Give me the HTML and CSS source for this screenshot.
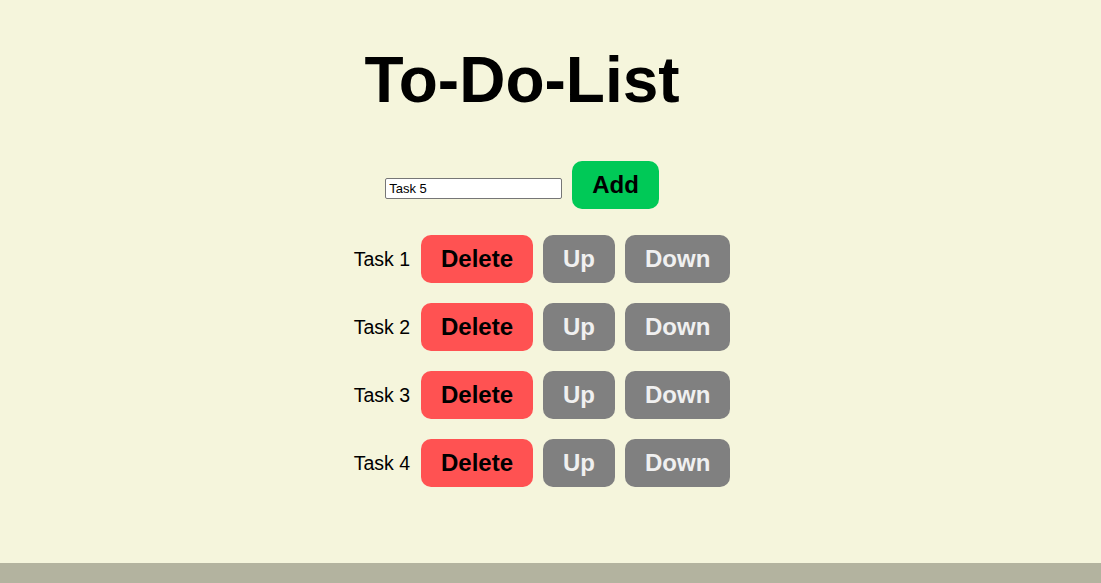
FILE: index.html
```html
<!DOCTYPE html>
<html>
<head>
<meta charset="utf-8">
<link rel="stylesheet" href="styles.css">
</head>
<body>
<div class="app">
  <h1 class="title">To-Do-List</h1>
  <div class="add-row">
    <input class="task-input" type="text" value="Task 5">
    <button class="btn btn-add">Add</button>
  </div>
  <ol class="list">
    <li class="item"><span class="label">Task 1</span><button class="btn btn-delete">Delete</button><button class="btn btn-move">Up</button><button class="btn btn-move">Down</button></li>
    <li class="item"><span class="label">Task 2</span><button class="btn btn-delete">Delete</button><button class="btn btn-move">Up</button><button class="btn btn-move">Down</button></li>
    <li class="item"><span class="label">Task 3</span><button class="btn btn-delete">Delete</button><button class="btn btn-move">Up</button><button class="btn btn-move">Down</button></li>
    <li class="item"><span class="label">Task 4</span><button class="btn btn-delete">Delete</button><button class="btn btn-move">Up</button><button class="btn btn-move">Down</button></li>
  </ol>
</div>
<div class="footer"></div>
</body>
</html>
```

FILE: styles.css
```css
html, body {
  margin: 0;
  padding: 0;
}
body {
  background: #f5f5dc;
  font-family: "Liberation Sans", Arial, sans-serif;
  height: 583px;
  display: flex;
  flex-direction: column;
  overflow: hidden;
}
.app {
  flex: 1;
  display: flex;
  flex-direction: column;
  align-items: center;
  padding-right: 57px;
}
.title {
  font-size: 64px;
  font-weight: bold;
  margin: 40px 0 0 0;
  line-height: 80px;
  color: #000;
}
.add-row {
  display: flex;
  align-items: center;
  gap: 10px;
  margin-top: 41px;
}
.task-input {
  box-sizing: border-box;
  width: 177px;
  height: 21px;
  margin-top: 6px;
  border: 1px solid #767676;
  border-radius: 2px;
  padding: 1px 3px;
  font-family: "Liberation Sans", Arial, sans-serif;
  font-size: 13px;
  background: #fff;
  color: #000;
}
.btn {
  border: none;
  border-radius: 10px;
  padding: 10px 20px;
  font-family: "Liberation Sans", Arial, sans-serif;
  font-size: 24px;
  font-weight: bold;
  line-height: 28px;
  cursor: pointer;
}
.btn-add {
  background: #00c957;
  color: #000;
}
.btn-delete {
  background: #ff5252;
  color: #000;
}
.btn-move {
  background: #808080;
  color: #f0f0f0;
}
.list {
  list-style: none;
  margin: 26px 0 0 0;
  padding: 0 0 0 40px;
  display: flex;
  flex-direction: column;
  gap: 20px;
}
.item {
  display: flex;
  align-items: center;
  gap: 10px;
}
.label {
  font-size: 19.5px;
  color: #000;
  margin-right: 1px;
}
.footer {
  height: 20px;
  background: #b3b39f;
}
```
